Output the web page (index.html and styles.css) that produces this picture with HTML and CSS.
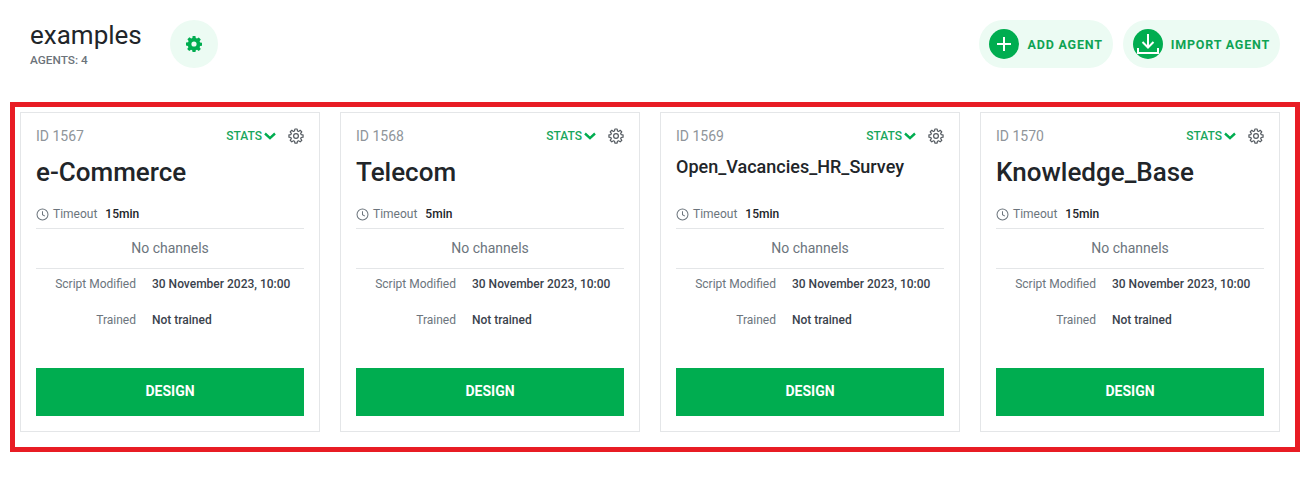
FILE: index.html
```html
<!DOCTYPE html>
<html lang="en">
  <head>
    <meta charset="UTF-8" />
    <title>examples</title>
    <link rel="stylesheet" href="styles.css">
  </head>
  <body>
    <svg class="icon-defs" width="0" height="0">
      <symbol id="gear" viewBox="0 0 24 24">
        <path fill="none" stroke="currentColor" stroke-width="1.8" stroke-linejoin="round" d="M10.300 1.500h3.400l.5 2.900 1.700.7 2.400-1.700 2.400 2.400-1.700 2.400.7 1.700 2.900.5v3.400l-2.900.5-.7 1.700 1.700 2.400-2.400 2.400-2.400-1.700-1.700.7-.5 2.900h-3.400l-.5-2.900-1.700-.7-2.400 1.700-2.400-2.400 1.700-2.400-.7-1.700-2.900-.5v-3.400l2.900-.5.7-1.700-1.700-2.400 2.400-2.400 2.400 1.700 1.700-.7z" />
        <circle cx="12" cy="12" r="3.600" fill="none" stroke="currentColor" stroke-width="1.8" />
      </symbol>
      <symbol id="chevron" viewBox="0 0 12 8">
        <path fill="none" stroke="currentColor" stroke-width="2.400" d="M1 1.500l5 4.600 5-4.600" />
      </symbol>
      <symbol id="clock" viewBox="0 0 14 14">
        <circle cx="7" cy="7" r="5.900" fill="none" stroke="currentColor" stroke-width="1.100" />
        <path fill="none" stroke="currentColor" stroke-width="1.100" d="M7 3.400V7.300l2.600 1.400" />
      </symbol>
    </svg>

    <header class="top-bar">
      <div class="project">
        <h1 class="project-name">examples</h1>
        <div class="project-count">AGENTS: 4</div>
      </div>
      <button class="round-button">
        <svg width="16" height="16" viewBox="0 0 16 16">
          <path fill="#00ad50" fill-rule="evenodd" d="M6.600 0h2.800l.4 2.100 1.200.5 1.800-1.200 2 2-1.200 1.800.5 1.200 2.100.4v2.800l-2.100.4-.5 1.200 1.200 1.800-2 2-1.800-1.200-1.200.5-.4 2.100H6.600l-.4-2.100-1.200-.5-1.800 1.200-2-2 1.200-1.800-.5-1.200L0 9.400V6.600l2.100-.4.5-1.200-1.200-1.800 2-2 1.800 1.200 1.200-.5zM8 5.400a2.600 2.600 0 100 5.200 2.600 2.600 0 000-5.200z" />
        </svg>
      </button>
      <div class="top-actions">
        <button class="pill-button pill-add">
          <span class="pill-icon">
            <svg width="18" height="18" viewBox="0 0 18 18">
              <path fill="none" stroke="#fff" stroke-width="2" d="M9 2v14M2 9h14" />
            </svg>
          </span>
          ADD AGENT
        </button>
        <button class="pill-button">
          <span class="pill-icon">
            <svg width="22" height="22" viewBox="0 0 22 22">
              <path fill="none" stroke="#fff" stroke-width="2" d="M11 1v13M5.500 9l5.500 5.500L16.500 9M1 15v5h20v-5" />
            </svg>
          </span>
          IMPORT AGENT
        </button>
      </div>
    </header>

    <main class="agents">
      <article class="card">
        <div class="card-top">
          <span class="card-id">ID 1567</span>
          <span class="stats">STATS<svg width="12" height="8"><use href="#chevron" /></svg></span>
          <svg class="card-gear" width="16" height="16"><use href="#gear" /></svg>
        </div>
        <h2 class="card-title">e-Commerce</h2>
        <div class="timeout">
          <svg width="13" height="13"><use href="#clock" /></svg>
          <span class="timeout-label">Timeout</span>
          <span class="timeout-value">15min</span>
        </div>
        <div class="channels">No channels</div>
        <dl class="facts">
          <dt>Script Modified</dt>
          <dd>30 November 2023, 10:00</dd>
          <dt>Trained</dt>
          <dd>Not trained</dd>
        </dl>
        <button class="design-button">DESIGN</button>
      </article>

      <article class="card">
        <div class="card-top">
          <span class="card-id">ID 1568</span>
          <span class="stats">STATS<svg width="12" height="8"><use href="#chevron" /></svg></span>
          <svg class="card-gear" width="16" height="16"><use href="#gear" /></svg>
        </div>
        <h2 class="card-title">Telecom</h2>
        <div class="timeout">
          <svg width="13" height="13"><use href="#clock" /></svg>
          <span class="timeout-label">Timeout</span>
          <span class="timeout-value">5min</span>
        </div>
        <div class="channels">No channels</div>
        <dl class="facts">
          <dt>Script Modified</dt>
          <dd>30 November 2023, 10:00</dd>
          <dt>Trained</dt>
          <dd>Not trained</dd>
        </dl>
        <button class="design-button">DESIGN</button>
      </article>

      <article class="card">
        <div class="card-top">
          <span class="card-id">ID 1569</span>
          <span class="stats">STATS<svg width="12" height="8"><use href="#chevron" /></svg></span>
          <svg class="card-gear" width="16" height="16"><use href="#gear" /></svg>
        </div>
        <h2 class="card-title card-title-long">Open_Vacancies_HR_Survey</h2>
        <div class="timeout">
          <svg width="13" height="13"><use href="#clock" /></svg>
          <span class="timeout-label">Timeout</span>
          <span class="timeout-value">15min</span>
        </div>
        <div class="channels">No channels</div>
        <dl class="facts">
          <dt>Script Modified</dt>
          <dd>30 November 2023, 10:00</dd>
          <dt>Trained</dt>
          <dd>Not trained</dd>
        </dl>
        <button class="design-button">DESIGN</button>
      </article>

      <article class="card">
        <div class="card-top">
          <span class="card-id">ID 1570</span>
          <span class="stats">STATS<svg width="12" height="8"><use href="#chevron" /></svg></span>
          <svg class="card-gear" width="16" height="16"><use href="#gear" /></svg>
        </div>
        <h2 class="card-title">Knowledge_Base</h2>
        <div class="timeout">
          <svg width="13" height="13"><use href="#clock" /></svg>
          <span class="timeout-label">Timeout</span>
          <span class="timeout-value">15min</span>
        </div>
        <div class="channels">No channels</div>
        <dl class="facts">
          <dt>Script Modified</dt>
          <dd>30 November 2023, 10:00</dd>
          <dt>Trained</dt>
          <dd>Not trained</dd>
        </dl>
        <button class="design-button">DESIGN</button>
      </article>
    </main>
  </body>
</html>
```

FILE: styles.css
```css
body {
  margin: 0;
  background: #fff;
  font-family: Roboto, "Liberation Sans", sans-serif;
  color: #212529;
  overflow: hidden;
}
button {
  font-family: inherit;
  border: none;
  cursor: pointer;
}
.icon-defs {
  display: block;
}
.top-bar {
  display: flex;
  align-items: center;
  height: 48px;
  padding: 20px 34px 34px 30px;
}
.project {
  width: 140px;
  margin-bottom: 1px;
}
.project-name {
  margin: 0;
  font-size: 26px;
  font-weight: 400;
  line-height: 30px;
}
.project-count {
  font-size: 11.800px;
  font-weight: 500;
  line-height: 14px;
  margin-top: 3px;
  color: #6c737a;
}
.round-button {
  width: 48px;
  height: 48px;
  border-radius: 50%;
  background: #ecfbf3;
  display: flex;
  align-items: center;
  justify-content: center;
  padding: 0;
}
.top-actions {
  display: flex;
  gap: 10px;
  margin-left: auto;
}
.pill-button {
  display: flex;
  align-items: center;
  gap: 8px;
  height: 48px;
  padding: 0 10px;
  border-radius: 24px;
  background: #ecfbf3;
  color: #0fa354;
  font-size: 12.500px;
  font-weight: 700;
  letter-spacing: 0.8px;
}
.pill-add {
  gap: 9px;
}
.pill-icon {
  width: 30px;
  height: 30px;
  border-radius: 50%;
  background: #00ad50;
  display: flex;
  align-items: center;
  justify-content: center;
}
.agents {
  display: flex;
  gap: 20px;
  margin: 0 14px 0 10px;
  padding: 5px 5px 15px;
  border: 5px solid #e81c24;
}
.card {
  box-sizing: border-box;
  width: 300px;
  height: 320px;
  padding: 11px 15px 15px;
  border: 1px solid #e4e6e8;
  display: flex;
  flex-direction: column;
}
.card-top {
  display: flex;
  align-items: center;
  height: 24px;
}
.card-id {
  font-size: 14px;
  color: #8f959a;
  margin-right: auto;
}
.stats {
  display: flex;
  align-items: center;
  gap: 2px;
  font-size: 12px;
  font-weight: 500;
  color: #19a65c;
}
.stats svg {
  color: #00ad50;
}
.card-gear {
  margin-left: 12px;
  color: #555b61;
}
.card-title {
  height: 54px;
  margin: 0;
  font-size: 26px;
  font-weight: 500;
  line-height: 48px;
}
.card-title-long {
  font-size: 18px;
  line-height: 38px;
}
.timeout {
  display: flex;
  align-items: center;
  height: 27px;
  box-sizing: border-box;
  padding-bottom: 2px;
  border-bottom: 1px solid #e4e6e8;
  font-size: 12px;
}
.timeout svg {
  color: #6c757d;
  margin-right: 4px;
}
.timeout-label {
  color: #6c757d;
  margin-right: 8px;
}
.timeout-value {
  font-weight: 500;
}
.channels {
  box-sizing: border-box;
  height: 40px;
  line-height: 38px;
  text-align: center;
  font-size: 14px;
  color: #6c757d;
  border-bottom: 1px solid #e4e6e8;
}
.facts {
  display: grid;
  grid-template-columns: 100px 1fr;
  column-gap: 16px;
  grid-auto-rows: 36px;
  margin: 0;
  height: 99px;
  font-size: 12px;
  line-height: 30px;
}
.facts dt {
  text-align: right;
  color: #6c757d;
}
.facts dd {
  margin: 0;
  font-weight: 500;
  color: #3a424c;
}
.design-button {
  height: 48px;
  padding: 0 0 2px;
  background: #00ad50;
  color: #fff;
  font-size: 14px;
  font-weight: 700;
}
```
